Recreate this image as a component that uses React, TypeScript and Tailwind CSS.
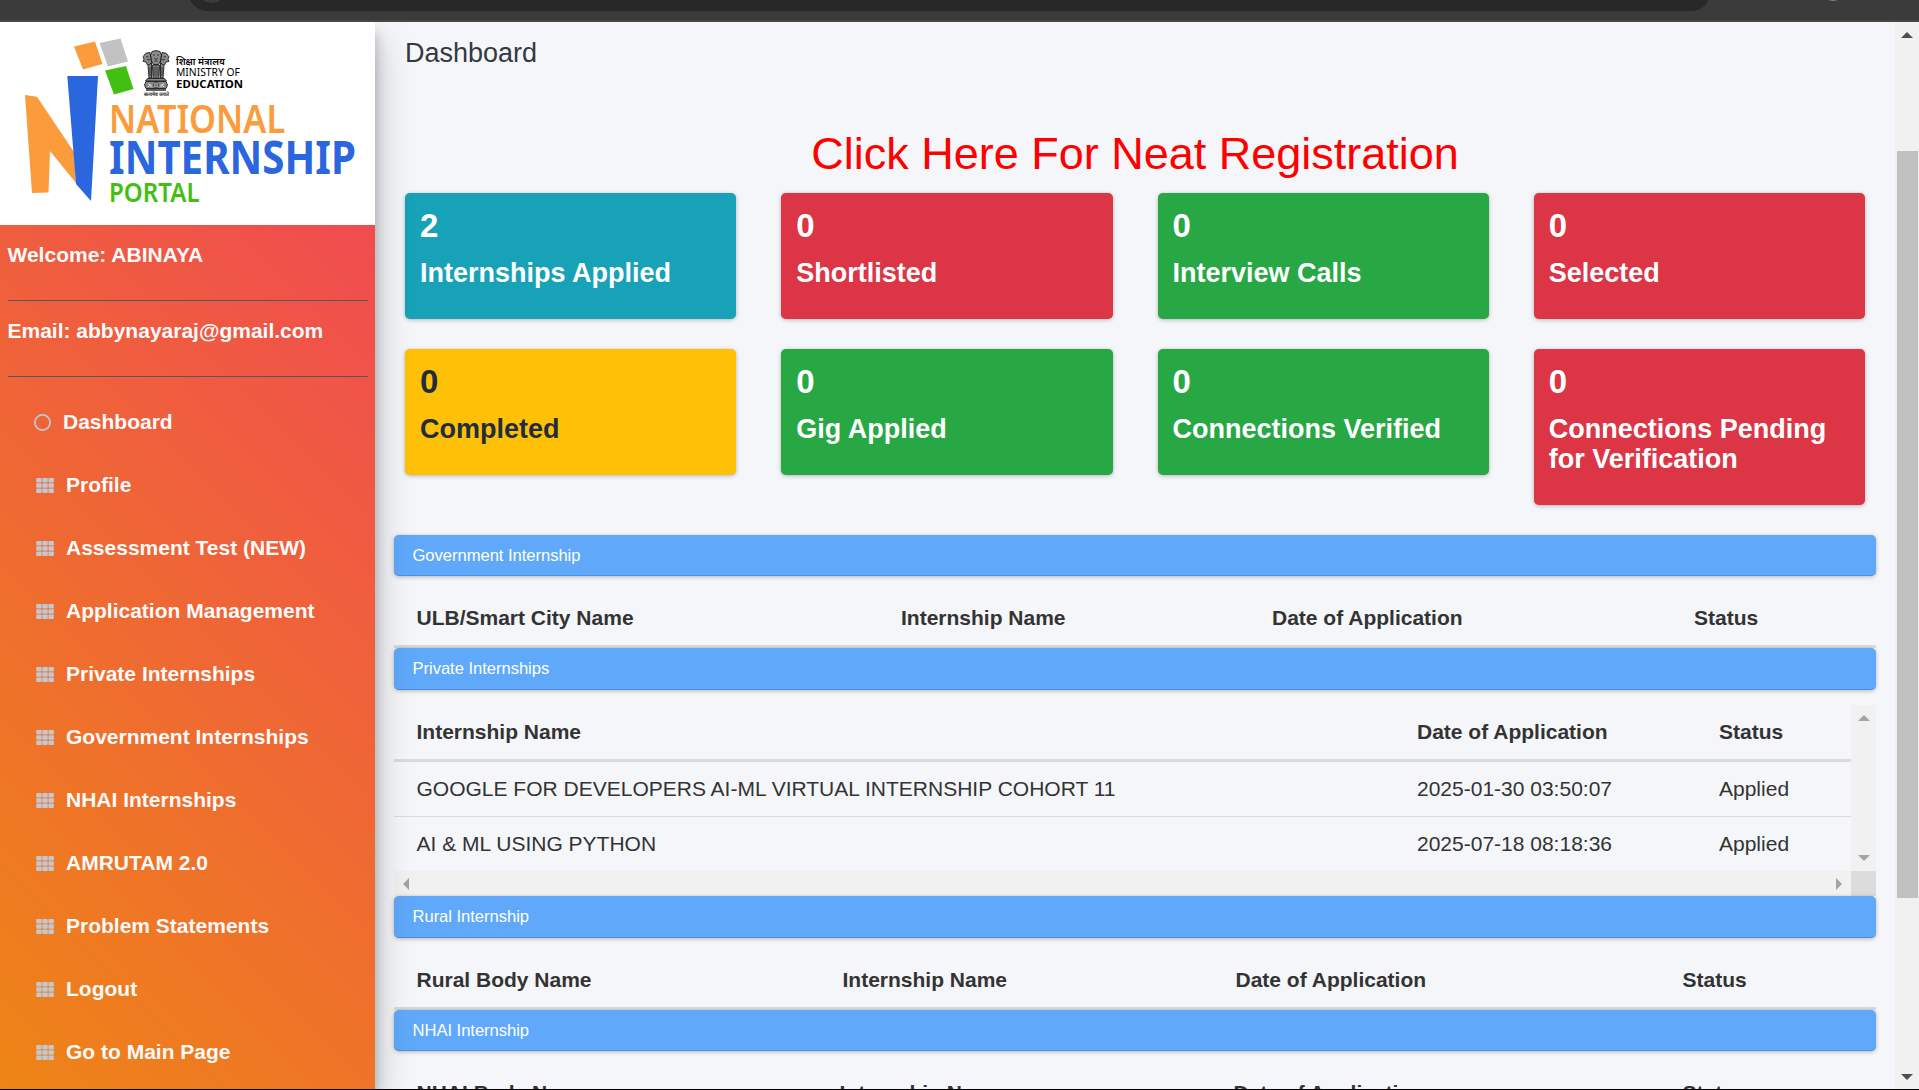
const navItems = [
  'Profile',
  'Assessment Test (NEW)',
  'Application Management',
  'Private Internships',
  'Government Internships',
  'NHAI Internships',
  'AMRUTAM 2.0',
  'Problem Statements',
  'Logout',
  'Go to Main Page',
];

const cards = [
  { value: 2, label: 'Internships Applied', tone: 'bg-[#17a2b8] text-white' },
  { value: 0, label: 'Shortlisted', tone: 'bg-[#dc3545] text-white' },
  { value: 0, label: 'Interview Calls', tone: 'bg-[#28a745] text-white' },
  { value: 0, label: 'Selected', tone: 'bg-[#dc3545] text-white' },
  { value: 0, label: 'Completed', tone: 'bg-[#ffc107] text-[#1f2d3d]' },
  { value: 0, label: 'Gig Applied', tone: 'bg-[#28a745] text-white' },
  { value: 0, label: 'Connections Verified', tone: 'bg-[#28a745] text-white' },
  { value: 0, label: 'Connections Pending for Verification', tone: 'bg-[#dc3545] text-white' },
];

function GridIcon() {
  return (
    <svg width="18" height="15" viewBox="0 0 18 15" className="shrink-0 fill-[#c2c7d0]">
      {[0, 5.2, 10.4].map((y) =>
        [0.2, 6.3, 12.4].map((x) => <rect key={`${x}-${y}`} x={x} y={y} width="5.5" height="4.5" rx="0.9" />),
      )}
    </svg>
  );
}

/* State emblem: three lions over an abacus */
function Emblem() {
  return (
    <svg viewBox="0 0 28 42" width="28" height="42">
      <g fill="#8a8a8a" stroke="#1c1c1c" strokeWidth=".9">
        <path d="M10 1.500 14 .6l4 .9 1.500 4-1 5.500-2 3.500h-5l-2-3.500-1-5.500z" />
        <path d="M8 2.500 4 3.200 1.200 6.500l.8 3-1 1.800 3 .7L5.500 15 8 16l1.500-4z" />
        <path d="M20 2.500 24 3.200l2.800 3.300-.8 3 1 1.800-3 .7-1.500 3-2.500 1-1.500-4z" />
        <path d="M6 15.500 9.500 13v15H7z" />
        <path d="M22 15.500 18.500 13v15H21z" />
        <path d="M10.500 15h7l-.5 13h-6z" />
        <path d="M5.500 28.500h17l2 2.500h-21z" />
        <path d="M4 31.500h20l1.500 3.500-1.500 3.500H4L2.500 35z" />
      </g>
      <path d="M4 40h20" stroke="#1c1c1c" strokeWidth="1.4" />
      <g fill="none" stroke="#222" strokeWidth=".8">
        <path d="M11 5h2m2 0h2M12 8.500q2 1.500 4 0M12.500 11h3M4 6.500l2.500.5M24 6.500l-2.500.5M5 9.500q2 1 3 0m12 0q1 1 3 0M12 17v9m2-10v11m2-10v9M8 17v9m12-9v9" />
        <path d="M6 34l3 1v2m-3 0 2-2M22 34l-3 1v2m3 0-2-2" stroke="#eee" />
      </g>
      <g fill="#ddd" stroke="#222" strokeWidth=".7">
        <circle cx="14" cy="35" r="2.700" />
        <path d="M11.500 35h5M14 32.500v5" />
      </g>
    </svg>
  );
}

function Logo() {
  return (
    <div className="relative h-[203px] bg-white">
      <svg className="absolute inset-0" width="375" height="203" viewBox="0 22 375 203">
        <path d="M74 46.500 95 41.500l7.500 22.500L83 69.500z" fill="#fa9b3c" />
        <path d="M99.500 43 120.500 38.500l7.500 23L108 66.500z" fill="#c2c2c2" />
        <path d="M105 70.500 126 66l7.500 23L114 94.500z" fill="#43bf12" />
        <path d="m25 95 12 1.700L74 152l2 31-26-32-1.500 41.500L32 193z" fill="#fa9b3c" />
        <path d="M67.300 76H98l-7 125-15-17z" fill="#2a66dd" />
      </svg>
      <div className="absolute left-[142px] top-[28px]"><Emblem /></div>
      <div className="absolute left-[144px] top-[69px] whitespace-nowrap text-[5px] leading-[7px] font-bold text-[#222]">सत्यमेव जयते</div>
      <div className="absolute left-[176px] top-[33px] flex flex-col whitespace-nowrap font-['Noto_Sans',sans-serif] text-black">
        <div className="h-[11.500px] text-[9.500px] leading-[13px] font-semibold">शिक्षा मंत्रालय</div>
        <div className="h-[11px] text-[10.300px] leading-[11px] font-normal">MINISTRY OF</div>
        <div className="text-[11.400px] leading-[11px] font-bold">EDUCATION</div>
      </div>
      <div className="absolute left-[109px] top-[79px] flex flex-col items-start whitespace-nowrap font-['Noto_Sans',sans-serif]">
        <div className="h-[35px] origin-left scale-x-[0.88] text-[39px] leading-[34px] font-semibold text-[#fa9b3c]">NATIONAL</div>
        <div className="h-[43px] origin-left scale-x-[0.879] text-[45.800px] leading-[40px] font-bold text-[#2a66dd]">INTERNSHIP</div>
        <div className="origin-left scale-x-[0.915] text-[26.300px] leading-[26px] font-semibold text-[#43bf12]">PORTAL</div>
      </div>
    </div>
  );
}

function Sidebar() {
  return (
    <aside className="relative z-10 flex w-[375px] shrink-0 flex-col bg-[linear-gradient(45deg,#ee8516_0%,#f04c50_100%)] bg-[length:375px_864px] bg-bottom bg-no-repeat font-bold text-[#fafafa] shadow-[0_17px_35px_rgba(0,0,0,0.25),0_12px_12px_rgba(0,0,0,0.22)]">
      <Logo />
      <div className="px-[7.500px] pt-[17px]">
        <div className="h-[59px] border-b border-[#4f5962] leading-[26px]">Welcome: ABINAYA</div>
        <div className="h-[76px] border-b border-[#4f5962] pt-[17px] leading-[26px]">Email: abbynayaraj@gmail.com</div>
      </div>
      <nav className="flex flex-col pt-[14px]">
        <a className="flex h-[63px] items-center pl-[34px]">
          <svg width="17" height="17" viewBox="0 0 17 17" fill="none" stroke="#c2c7d0" strokeWidth="1.7">
            <circle cx="8.500" cy="8.500" r="7.600" />
          </svg>
          <span className="mb-[2px] ml-[12px]">Dashboard</span>
        </a>
        {navItems.map((item) => (
          <a key={item} className="flex h-[63px] items-center pl-[36px]">
            <GridIcon />
            <span className="mb-[2px] ml-[12px]">{item}</span>
          </a>
        ))}
      </nav>
    </aside>
  );
}

function Section({ title, height }: { title: string; height: string }) {
  return (
    <div className={`${height} shrink-0 rounded-[5px] border-b border-[#4b93e0] bg-[#60a9fa] pl-[18.500px] text-[16.600px] leading-[42px] tracking-[-0.04px] text-white shadow-[0_0_1px_rgba(0,0,0,0.15),0_1px_4px_rgba(0,0,0,0.25)]`}>
      {title}
    </div>
  );
}

function HeadRow({ labels, columns }: { labels: string[]; columns: string }) {
  return (
    <div className={`grid ${columns} h-[57px] shrink-0 border-b-[3px] border-[#d9dbde] pl-[22.500px] leading-[54px] font-bold whitespace-nowrap`}>
      {labels.map((label) => (
        <span key={label}>{label}</span>
      ))}
    </div>
  );
}

const applications = [
  ['GOOGLE FOR DEVELOPERS AI-ML VIRTUAL INTERNSHIP COHORT 11', '2025-01-30 03:50:07', 'Applied'],
  ['AI & ML USING PYTHON', '2025-07-18 08:18:36', 'Applied'],
];

function PrivateTable() {
  return (
    <div className="mt-[15px] grid shrink-0 grid-cols-[1fr_25px] grid-rows-[166px_25px]">
      <div>
        <HeadRow labels={['Internship Name', 'Date of Application', 'Status']} columns="grid-cols-[1000.5px_302px_1fr]" />
        {applications.map((row, i) => (
          <div
            key={row[0]}
            className={`grid grid-cols-[1000.5px_302px_1fr] pl-[22.500px] whitespace-nowrap ${i === 0 ? 'h-[55px] border-b border-[#d9dbde] leading-[54px]' : 'h-[54px] leading-[54px]'}`}
          >
            {row.map((cell) => (
              <span key={cell}>{cell}</span>
            ))}
          </div>
        ))}
      </div>
      <div className="flex flex-col items-center justify-between bg-[#f1f1f1] py-[10px]">
        <svg width="12" height="6"><path d="M6 0 12 6H0z" fill="#a3a3a3" /></svg>
        <svg width="12" height="6"><path d="M0 0H12L6 6z" fill="#a3a3a3" /></svg>
      </div>
      <div className="flex items-center justify-between bg-[#f1f1f1] px-[9px]">
        <svg width="6" height="12"><path d="M6 0V12L0 6z" fill="#a3a3a3" /></svg>
        <svg width="6" height="12"><path d="M0 0 6 6 0 12z" fill="#a3a3a3" /></svg>
      </div>
      <div className="bg-[#dcdcdc]" />
    </div>
  );
}

export default function App() {
  return (
    <div className="flex h-[1090px] w-[1919px] flex-col overflow-hidden border-b border-black bg-[#f4f6f9] font-['Liberation_Sans',Arial,sans-serif] text-[21px] text-[#333]">
      <header className="relative h-[22px] shrink-0 overflow-hidden border-b-2 border-[#474546] bg-[#3b3b3b]">
        <div className="ml-[188px] -mt-[29px] h-[40px] w-[1523px] rounded-full bg-[#282828]" />
        <div className="absolute left-[197px] -top-[27px] size-[30px] rounded-full bg-[#3b3b3b]" />
        <div className="absolute left-[1823px] -top-[19px] size-[20px] rounded-full bg-[#a0705f]" />
      </header>
      <div className="flex min-h-0 flex-1 overflow-hidden">
        <Sidebar />
        <main className="flex min-w-0 flex-1 flex-col pr-[19px] pl-[19px]">
          <h1 className="mt-[14px] h-[72px] shrink-0 pl-[11px] text-[27px] leading-[34px] text-[#343a40]">Dashboard</h1>
          <a className="h-[85px] shrink-0 pt-[19px] text-center text-[45px] leading-[54px] text-[#ff0000]">Click Here For Neat Registration</a>
          <div className="grid shrink-0 grid-cols-4 items-start gap-x-[45px] gap-y-[30px] px-[11px] pb-[30px]">
            {cards.map((card) => (
              <div key={card.label} className={`rounded-[5px] px-[15px] pt-[12px] pb-[31px] font-bold shadow-[0_0_1px_rgba(0,0,0,0.15),0_1px_4px_rgba(0,0,0,0.25)] ${card.tone}`}>
                <div className="h-[53px] text-[33px] leading-[42px]">{card.value}</div>
                <div className="text-[27px] leading-[30px]">{card.label}</div>
              </div>
            ))}
          </div>
          <Section title="Government Internship" height="h-[41px]" />
          <div className="h-[15px] shrink-0" />
          <HeadRow labels={['ULB/Smart City Name', 'Internship Name', 'Date of Application', 'Status']} columns="grid-cols-[484.5px_371px_422px_1fr]" />
          <Section title="Private Internships" height="h-[42px]" />
          <PrivateTable />
          <Section title="Rural Internship" height="h-[42px]" />
          <div className="h-[15px] shrink-0" />
          <HeadRow labels={['Rural Body Name', 'Internship Name', 'Date of Application', 'Status']} columns="grid-cols-[426px_393px_447px_1fr]" />
          <Section title="NHAI Internship" height="h-[41px]" />
          <div className="h-[15px] shrink-0" />
          <HeadRow labels={['NHAI Body Name', 'Internship Name', 'Date of Application', 'Status']} columns="grid-cols-[423px_394px_449px_1fr]" />
        </main>
        <div className="flex w-[24px] shrink-0 flex-col items-center bg-[#f1f1f1]">
          <svg className="mt-[10px] shrink-0" width="12" height="6"><path d="M6 0 12 6H0z" fill="#505050" /></svg>
          <div className="mt-[113px] h-[747px] w-[21px] shrink-0 bg-[#c1c1c1]" />
          <svg className="mt-[176px] shrink-0" width="12" height="6"><path d="M0 0H12L6 6z" fill="#505050" /></svg>
        </div>
      </div>
    </div>
  );
}
